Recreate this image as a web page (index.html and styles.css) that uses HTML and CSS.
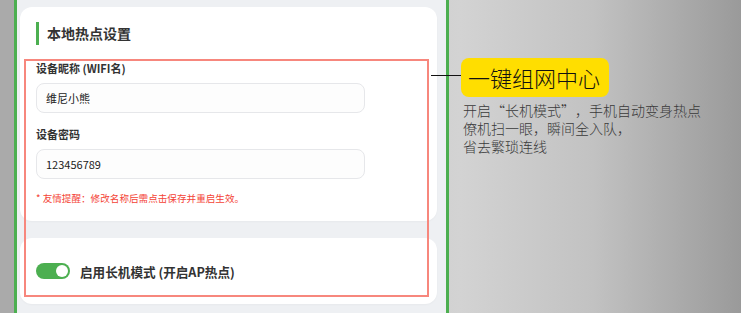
FILE: index.html
```html
<!DOCTYPE html>
<html lang="zh-CN">
<head>
    <meta charset="UTF-8">
    <meta name="viewport" content="width=device-width, initial-scale=1.0">
    <title>一键组网中心</title>
    <link rel="stylesheet" href="styles.css">
</head>
<body>
    <div class="stage">
        <div class="edge"></div>
        <div class="phone">
            <section class="card">
                <h2 class="card-title">本地热点设置</h2>
                <label class="field-label" for="ssid">设备昵称 (WIFI名)</label>
                <input class="field" type="text" id="ssid" value="维尼小熊">
                <label class="field-label" for="pwd">设备密码</label>
                <input class="field" type="text" id="pwd" value="123456789">
                <p class="hint">* 友情提醒：修改名称后需点击保存并重启生效。</p>
            </section>
            <section class="card card-switch">
                <span class="toggle"><span class="knob"></span></span>
                <span class="switch-text">启用长机模式 (开启AP热点)</span>
            </section>
        </div>
        <aside class="callout">
            <div class="callout-title">一键组网中心</div>
            <p class="callout-text">开启<span class="q">“</span>长机模式<span class="q">”</span>，手机自动变身热点<br>僚机扫一眼，瞬间全入队，<br>省去繁琐连线</p>
        </aside>

        <!-- annotation overlay -->
        <div class="mark"></div>
        <div class="connector"></div>
    </div>
</body>
</html>
```
FILE: styles.css
```css
body {
    margin: 0;
    font-family: "Noto Sans CJK SC", "Noto Sans", sans-serif;
    background: linear-gradient(90deg, #a9a9a9 0%, #d3d3d3 62%, #c2c2c2 80%, #9a9a9a 100%);
    overflow: hidden;
}
.stage {
    position: relative;
    display: flex;
    height: 313px;
}
.edge {
    width: 14px;
    background-color: #aaaaaa;
}
.phone {
    width: 417px;
    border-left: 3px solid #4caf50;
    border-right: 3px solid #4caf50;
    background-color: #eef0f3;
    padding: 7px 9px 0 3px;
}
.card {
    background-color: #fff;
    border-radius: 12px;
    padding: 15px 16px 16px;
    box-shadow: 0 1px 2px rgba(0, 0, 0, 0.03);
}
.card-title {
    margin: 0;
    height: 23px;
    line-height: 23px;
    border-left: 3px solid #4caf50;
    padding-left: 8px;
    font-size: 14px;
    font-weight: 700;
    color: #333;
}
.field-label {
    display: block;
    margin: 15px 0 7px;
    font-size: 11px;
    line-height: 16px;
    font-weight: 700;
    color: #333;
}
.field-label + .field + .field-label {
    margin-top: 13px;
}
.field {
    display: block;
    width: 329px;
    height: 30px;
    padding: 0 9px;
    border: 1px solid #e6e7ea;
    border-radius: 8px;
    background-color: #fdfdfd;
    box-sizing: border-box;
    font-family: inherit;
    font-size: 11px;
    color: #222;
    outline: none;
}
.hint {
    margin: 12px 0 0;
    font-size: 9.6px;
    line-height: 14px;
    color: #f44336;
}
.card-switch {
    margin-top: 17px;
    height: 66px;
    padding: 0 16px;
    display: flex;
    align-items: center;
    gap: 10px;
    box-sizing: border-box;
}
.toggle {
    position: relative;
    width: 34px;
    height: 16px;
    border-radius: 8px;
    background-color: #4caf50;
}
.knob {
    position: absolute;
    right: 2px;
    top: 2px;
    width: 12px;
    height: 12px;
    border-radius: 50%;
    background-color: #fff;
}
.switch-text {
    font-size: 12.6px;
    font-weight: 700;
    color: #333;
}
.callout {
    padding: 58px 0 0 12px;
}
.callout-title {
    display: inline-block;
    height: 39px;
    line-height: 39px;
    padding: 0 9px 0 7px;
    border-radius: 8px;
    background-color: #ffde00;
    font-size: 22px;
    font-weight: 300;
    color: #111;
}
.callout-text {
    margin: 4px 0 0 2px;
    font-size: 14px;
    line-height: 18px;
    font-weight: 300;
    color: #3a3a3a;
}
.q {
    display: inline-block;
    width: 14px;
    text-align: center;
}
.mark {
    position: absolute;
    left: 24px;
    top: 59px;
    width: 401px;
    height: 234px;
    border: 2px solid #f7877d;
}
.connector {
    position: absolute;
    left: 431px;
    top: 75px;
    width: 30px;
    height: 1px;
    background-color: #111;
}
```
